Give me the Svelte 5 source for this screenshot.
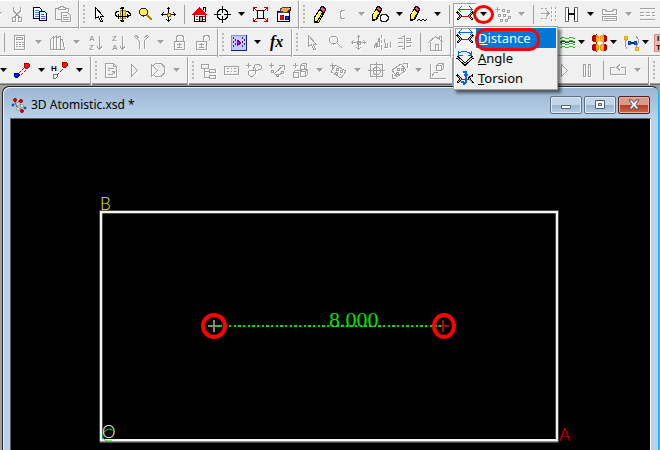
<script>
// each shape: [path, stroke, fill, width], or { t, x, y, size } for a letter
const pencil = [
	['M12 1l4 3-7 13-5 1 0-5z', '#000', '#ff0'],
	['M12 1l4 3-2 4-4-3z', '#000', '#f49'],
	['M13 7l-6 10M4 16l0 2 3-1z', '#000', '#000'],
	['M10 6l-5 8', '#fff'],
]
const miniPencil = [
	['M7 1l4 3-5 10-5 2 0-5z', '#000', '#ff0'],
	['M7 1l4 3-2 3-4-3z', '#000', '#f49'],
	['M9 7l-4 7M1 14l0 2 3-1z', '#000', '#000'],
	['M5 6l-3 5', '#fff'],
]
const cursor = 'M5.5 2.5v11l3-2 2 5h2l-2-5h3z'
const lens = 'M3.500 7a4 4 0 1 0 8 0a4 4 0 1 0-8 0zM11 10l5 5'
const move = 'M9.5 2v15M2 9.5h15M7.5 4.5l2-2 2 2M7.5 14.5l2 2 2-2M4.5 7.5l-2 2 2 2M14.5 7.5l2 2-2 2'
const home = 'M2.5 9.5l7-6 8 6M4.5 9v8h11v-8M9.5 17v-6h3v6M13.5 6v-3h2v4'
const cube = 'M9.5 10.5h5v5h-5zM9.5 10.5l2-2h5v5l-2 2M14.5 10.5l2-2'
const icons = {
	cut: [['M5.5 2v4l6 6M12.5 2v4l-6 6'], ['M4.5 12.5h3v4h-3zM10.5 12.5h3v4h-3z']],
	copy: [
		['M2.5 2.5h6l2 2v9h-8z', '#000', '#fff'], ['M4 5.5h4M4 7.5h4M4 9.5h4M4 11.5h4', '#48f'],
		['M8.5 6.5h5l2 2v7h-7z', '#000', '#ffc'], ['M10 9.5h3M10 11.5h4M10 13.5h4', '#26f'],
	],
	paste: [['M7 14.5h-5.5v-11h3M11 3.5h3v3M4.5 4.5v-2h2v-1h3v1h2v2zM7.5 7.5h6l3 3v6h-9zM9 10.5h4M9 12.5h6M9 14.5h6']],
	cursor: [[cursor, '#000', '#fff']],
	cursorOff: [[cursor]],
	rotate: [
		['M7 5h5v8h-5z', '#a90', '#fd0'], ['M9.5 2v15M7.5 3.5l2-1 2 1M7.5 15.5l2 1 2-1', '#000'],
		['M6 6.5h-2l-2 2v2l3 1h9l3-1v-2l-2-2h-2M5.5 9v5M14.5 9v4', '#000'],
	],
	zoom: [[lens, '#222', '#ffe95a'], ['M11 10l5 5', '#a80', 'none', 2]],
	zoomOff: [[lens]],
	move: [[move, '#000'], ['M8 8h3v3h-3z', '#860', '#fd0']],
	moveOff: [[move], ['M8 8h3v3h-3z']],
	home: [
		['M4.5 8v8h11v-8', '#000', '#fff'], ['M2.5 9.5l7-7 7 7z', '#d00', '#f00'],
		['M13.5 5v-3h2v5', '#000'], ['M9 11h3v5h-3z', '#000', '#aaa'], ['M6 11.5h2M13 11.5h2M6 14.5h2M13 14.5h2', '#d00'],
	],
	homeOff: [[home]],
	target: [['M7 4.500h5l2.500 2.500v5l-2.500 2.500h-5l-2.500-2.500v-5zM9.500 1v7M9.500 11v7M1 9.500h7M11 9.500h7', '#000']],
	fit: [
		['M6.500 5.500h6v8h-6z', '#000'],
		['M2.500 6v-3.500h3M13 2.500h3.500v3.500M2.500 13v3.500h3M13 16.500h3.500v-3.500M3 3l3 3M16 3l-3 3M3 16l3-3M16 16l-3-3', '#c00'],
	],
	props: [
		['M3.500 6.500h12v10h-12z', '#000', '#fff'], ['M3 7.500h12', '#22c'],
		['M6 10h3v4h-3z', '#c00', '#f00'], ['M11 11h3v3h-3z', '#008', '#24d'],
		['M6 4l4-2h5l1 3-5 3-5-2z', '#542', '#eca45c'], ['M14.500 2.500h2v3', '#000', '#fff'],
	],
	pencil,
	arc: [['M12 5.500h-3l-2 2v4l2 2h3']],
	pencilRing: [...miniPencil, ['M11 9.500h4l2 2v3l-2 2h-4l-2-2v-3z', '#222', '#fff']],
	pencilWave: [...miniPencil, ['M8 16l2-2 2 2 2-2 2 2 2-2', '#000']],
	distance: [
		['M3 4.500h15M6.500 1.500l-3 3 3 3M14.500 1.500l3 3-3 3', '#06e'],
		['M2 7l4 4-4 4M18 7l-4 4 4 4', '#000', 'none', 2],
		['M3 8l3 3-3 3M17 8l-3 3 3 3', '#bbb'], ['M7 11.500h7', '#e00'],
	],
	angle: [
		['M3 6.500c2-4 10-4 13 0M3.500 3v4h4M16.500 3v4h-4', '#06e'],
		['M2 9l8 7 8-7', '#000', 'none', 3], ['M2 9l8 7 8-7', '#ccc'],
	],
	torsion: [
		['M2 7l4 4-4 4M18 7l-4 3 4 5', '#000', 'none', 2],
		['M3 8l3 3-3 3M17 8l-3 3 3 4', '#bbb'], ['M6 11.500h8', '#e00'],
		['M8 3.500h3v11l-3 2M6 13.500h3M9 7h4', '#06e', 'none', 2],
	],
	dots: [['M2 4.500h5M4.500 2v5M9.500 4.500h2v2h-2zM14.500 5.500h2v2h-2zM5.500 9.500h2v2h-2zM10.500 9.500h2v2h-2zM15.500 11.500h2v2h-2zM7.500 14.500h2v2h-2zM12.500 14.500h2v2h-2z']],
	shift: [['M2 3.500h2M6 3.500h2M2 8.500h8M7 5l3 3.500-3 3M2 13.500h2M6 13.500h2M12.500 2v2M12.500 6v2M12.500 10v2M12.500 14v2M16.500 2v2M16.500 6v2M16.500 10v2M16.500 14v2']],
	hbond: [
		['M3.500 2.500h3v14h-3zM12.500 2.500h3v14h-3z', '#777', '#fff'],
		['M6.500 4v11M12.500 4v11M7 9.500h6M7 8.500h6', '#111'],
	],
	tray: [['M2.500 4v5h14v-5h-2l-2 2h-6l-2-2zM2.500 11.500h14v4h-14zM4 13.500h11']],
	lines: [['M2 3.500h15M2 7.500h4M8 7.500h4M14 7.500h3M2 10.500h4M8 10.500h4M14 10.500h3M2 14.500h15']],
	calc: [['M4.500 2.500h10v14h-10zM6.500 4.500h6v2h-6zM6 9.500h2M9 9.500h2M12 9.500h2M6 11.500h2M9 11.500h2M12 11.500h2M6 13.500h2M9 13.500h2M12 13.500h2']],
	books: [['M2.500 16.500v-10l3-3v13zM5.500 5.500l3-3v14h-3M8.500 4.500l4-1v13h-4M12.500 6.500h2l2 10h-4']],
	sortAZ: [{ t: 'A', x: 3, y: 8, size: 8 }, { t: 'Z', x: 3, y: 17, size: 8 }, ['M13.500 3v13M11 13.500l2.500 3 2.500-3']],
	sortZA: [{ t: 'Z', x: 3, y: 8, size: 8 }, { t: 'A', x: 3, y: 17, size: 8 }, ['M13.500 3v13M11 13.500l2.500 3 2.500-3']],
	funnel: [['M2 3l5 5v8M17 3l-5 5v8M3 2l4 3M16 2l-4 3']],
	lock: [['M4.500 8.500h10v8h-10zM6.500 8v-4l2-2h3l2 2v4M7 11.500h5M7 14.500h5M9.500 10v5']],
	unlock: [['M3.500 8.500h10v8h-10zM10.500 8v-4l2-2h2l2 2v4M6 11.500h5M6 14.500h5M8.500 10v5']],
	filmstrip: [
		['M2 2h15v15h-15z', '#8888ee', '#c8c8ff'], ['M17 2v15h-15', '#1020a0'],
		['M4.500 4v2M6.500 6v2M4.500 8v2M6.500 10v2M4.500 12v2M13.500 4v2M15.500 6v2M13.500 8v2M15.500 10v2M13.500 12v2', '#333'],
		['M8 7l4 3-4 3z', '#70c', '#82e'],
	],
	fx: [{ t: 'fx', x: 3, y: 14, size: 16, italic: true }],
	mirror: [['M9.500 2v3M9.500 7v3M9.500 12v5M7 5l-2 8h2zM2 15l2-5v5M12 6l2 8h-2M15 10v5M18 9v6']],
	align: [['M9.500 2v15M3 5.500h5M3 9.500h5M3 13.500h5M11 5.500h4v2h-4M11 9.500h6M11 13.500h4v-2M6.500 3.500h3v12h-3']],
	waves: [
		['M2 6l3-2 4 2 4-2 4 2M2 15l3-2 4 2 4-2 4 2', '#3b3'], ['M2 9l3-2 4 2 4-2 4 2M2 12l3-2 4 2 4-2 4 2', '#4a4'],
		['M2 10l3-2 4 2 4-2 4 2', '#050'],
	],
	orbitals: [
		['M6 2a3 3 0 0 0 0 7zM6 11a3 3 0 0 0 0 7zM13 2a3 3 0 0 1 0 7zM13 11a3 3 0 0 1 0 7z', '#a00', '#c00'],
		['M6 2a2 3 0 0 1 0 7zM6 11a2 3 0 0 1 0 7zM13 2a2 3 0 0 0 0 7zM13 11a2 3 0 0 0 0 7z', '#f90', '#fb3'],
	],
	chain: [
		['M5 6l-2 3v3l2 4M14 3l2 3v4l-2 4', '#999'], ['M7 10h6', '#222', 'none', 2],
		['M2 3h3v3h-3zM13 14h3v3h-3z', '#da0', '#fc0'], ['M6 8h2v3h-2zM12 8h2v3h-2z', '#04c', '#06f'],
	],
	table: [['M0 1h19v17h-19z', '#d98c80', '#f3b9a8'], { t: 'I', x: 3, y: 8, size: 8 }, { t: 'T', x: 2, y: 17, size: 8 }],
	bond: [
		['M6 12l2-2M9 9l2-2M8 14l2-2M11 11l2-2', '#d00'],
		['M2 12h3l1 1v2l-1 1h-3l-1-1v-2z', '#00a', '#11e'], ['M12 2h3l1 1v3l-1 1h-3l-1-1v-3z', '#a00', '#f11'],
	],
	hydrogen: [
		{ t: 'H', x: 0, y: 10, size: 8, dark: true }, ['M6 14l2-2M9 11l3-3', '#333'],
		['M2 13h3l1 1v2l-1 1h-3z', '#777', '#fff'], ['M12 1h3l1 1v3l-1 1h-3l-1-1v-3z', '#a00', '#f11'],
	],
	doc: [['M3.500 2.500h8l3 3v11h-11zM11.500 2.500v3h3M6 7.500h6M6 9.500h2M6 13.500h4l2-3M10 10.500h2v2']],
	play: [['M6.500 3.500v12l6-6z']],
	playRing: [['M3.500 3.500v12l6-6zM5 4.500l3-2h5l3 3v7l-3 3h-5l-3-2']],
	tree: [['M2.500 3.500h7v4h-7zM10.500 8.500h6v3h-6zM10.500 14.500h6v3h-6zM5.500 8v8h5M5.500 10.500h5']],
	strip: [['M2.500 5.500h14v8h-14zM5 7.500h2M5 10.500h2M9 7.500h1M9 10.500h1M12 7.500h2M12 10.500h2']],
	loopAdd: [['M1 4.500h5M3.500 2v5M8 9l2-5 3-1 3 2v3l-3 1h-8l-2 2v2l2 2h3l2-2v-6']],
	vectorAdd: [['M1 4.500h5M3.500 2v5M7 12l8-7M11 4.500h5v4M3.500 9.500h2v2h-2zM8.500 13.500h2v2h-2zM13.500 10.500h2v2h-2zM6 12l2 2M11 14l3-2']],
	cubeAdd: [['M2 4.500h5M4.500 2v5M9.500 4.500h4v4h-4zM9.500 4.500l2-2h4v4l-2 2M2.500 11.500h5v5h-5zM2.500 11.500l2-2h5'], [cube]],
	cellAdd: [['M1 4.500h5M3.500 2v5M6 4l11 6-5 7-10-6zM7.500 7.500h2v2h-2zM11.500 9.500h2v2h-2zM6.500 11.500h2v2h-2zM10.500 13.500h1']],
	frame: [['M3.500 3.500h12v12h-12zM9.500 1v17M1 9.500h17M7.500 6.500h4l2 2v3l-2 2h-4l-1-2v-3z']],
	cellSpin: [['M2 9l9-6 5 6-9 7zM7.500 7.500h2v2h-2zM11.500 7.500h2v2h-2zM6.500 11.500h2v2h-2zM13 2.500h4v4M2 13v4h4']],
	axes: [['M2.500 3v14h15M4 15l3-4 3 1'], ['M8.500 4.500h5v5h-5zM8.500 4.500l2-2h5v5l-2 2M13.500 4.500l2-2']],
	pause: [['M5.500 3.500h2v12h-2zM10.500 3.500h2v12h-2z']],
	loop: [['M6 6.500h-4.500v7h15v-7h-5M11 3.500l-3 3 3 3']],
}

// '|' separator, '/' toolbar boundary, 'v' and 'V' drop arrows (off, on), '-name' greyed out
const rows = [
	'v -cut copy -paste / cursor rotate zoom move | home target V fit props / pencil -arc v pencilRing V pencilWave V | distance V! -dots v | -shift hbond V -tray v -lines',
	'| -calc v -books v -sortAZ -sortZA -funnel v -lock -unlock / filmstrip V fx / -cursorOff -zoomOff -moveOff -mirror -align | -homeOff / ~ waves V orbitals V chain V table',
	'V bond V hydrogen V / -doc -play -playRing v / -tree -strip -loopAdd -vectorAdd -cubeAdd v -cellAdd v -frame -cellSpin v -axes / ~ -play -pause | -loop v /',
].map(r => r.split(' '))

const measures = ['Distance', 'Angle', 'Torsion']
let picked = $state('Distance')
</script>

{#snippet icon(name)}
<svg class="icon" viewBox="0 0 19 19" aria-hidden="true">
	{#each icons[name] as s}
	{#if s.t}
	<text class:italic={s.italic} class:dark={s.dark} x={s.x} y={s.y} font-size={s.size}>{s.t}</text>
	{:else}
	<path d={s[0]} stroke={s[1] || 'currentColor'} fill={s[2] || 'none'} stroke-width={s[3] || 1} />
	{/if}
	{/each}
</svg>
{/snippet}

<main>
	{#each rows as row, i}
	<div class="bar bar{i}" role="toolbar" aria-label="Toolbar {i + 1}">
		{#each row as item}
		{#if item == '|'}
		<i class="sep"></i>
		{:else if item == '/'}
		<i class="edge"></i>
		{:else if item == '~'}
		<i class="space"></i>
		{:else if item[0].toLowerCase() == 'v'}
		<button class="drop" class:ringed={item == 'V!'} disabled={item == 'v'} aria-label="More">
			<svg viewBox="0 0 9 5"><path d="M1 0h7l-3.500 4z" fill="currentColor" /></svg>
		</button>
		{:else if item == 'distance'}
		<div class="measure">
			<button class="tool pressed" aria-label={item}>{@render icon(item)}</button>
			<div class="menu" role="menu">
				{#each measures as m}
				<button role="menuitem" class:on={picked == m} onclick={() => picked = m}>
					<span class="pic">{@render icon(m.toLowerCase())}</span>
					<span class="name"><u>{m[0]}</u>{m.slice(1)}</span>
				</button>
				{/each}
			</div>
		</div>
		{:else}
		<button class="tool" disabled={item[0] == '-'} aria-label={item.replace('-', '')}>{@render icon(item.replace('-', ''))}</button>
		{/if}
		{/each}
	</div>
	{/each}

	<div class="desk">
		<section class="window">
			<header>
				<svg class="logo" viewBox="0 0 16 16" aria-hidden="true">
					<path d="M3 3l3 7 5 3M9 3l-3 3 7 4" stroke="#555" fill="none" />
					<g fill="#e00" stroke="#a00"><circle cx="4" cy="3" r="1.500" /><circle cx="10" cy="4" r="1.500" /><circle cx="11" cy="14" r="1.500" /></g>
					<g fill="#fff" stroke="#999"><circle cx="7" cy="7" r="1.500" /><circle cx="7" cy="12" r="1.500" /><circle cx="11" cy="9" r="1.500" /></g>
					<g fill="#28e" stroke="#048"><circle cx="2" cy="8" r="1" /><circle cx="14" cy="11" r="1" /></g>
				</svg>
				<h1>3D Atomistic.xsd *</h1>
				<button class="ctl" aria-label="Minimize"><svg viewBox="0 0 12 11"><path d="M1.500 6.500h9v3h-9z" fill="#fff" stroke="#5b6673" /></svg></button>
				<button class="ctl" aria-label="Maximize"><svg viewBox="0 0 12 11"><path d="M1.500 1.500h9v8h-9zM4.500 4.500h3v2h-3z" fill="#fff" fill-rule="evenodd" stroke="#4d5b6b" /></svg></button>
				<button class="ctl close" aria-label="Close"><svg viewBox="0 0 12 11"><path d="M1 1h3l2 2.500 2-2.500h3l-3 4.500 3 4.500h-3l-2-2.500-2 2.500h-3l3-4.500z" fill="#fff" stroke="#5b4a55" /></svg></button>
			</header>
			<svg class="scene" role="img" aria-label="Unit cell">
				<rect class="shade" x="90" y="93" width="456" height="229" />
				<rect class="cell" x="90" y="93" width="456" height="228" />
				<text x="89" y="91" fill="#f0f000">B</text>
				<text x="548" y="322" fill="#ff0000">A</text>
				<path d="M102 311a7 7 0 0 0-8 1a6 6 0 0 0 1 10h6" fill="none" stroke="#00e000" />
				<text x="91" y="319" fill="#fff">O</text>
				<path d="M197 207h13M203 201v12" stroke="#888" stroke-width="2" />
				<path d="M427 207h11M432 201v12" stroke="#a01010" stroke-width="2" />
				<path class="dots" d="M204 207h228" />
				<text class="length" x="318" y="208">8.000</text>
				<ellipse class="mark" cx="203" cy="207" rx="11" ry="11" />
				<ellipse class="mark" cx="433" cy="207" rx="10" ry="11" />
			</svg>
		</section>
	</div>
</main>

<style>
:global(body) {
	margin: 0;
	background: #f0f0f0;
}
main {
	display: flex;
	flex-direction: column;
	height: 100vh;
	overflow: hidden;
	font-family: "Noto Sans", sans-serif;
}
button {
	padding: 0;
	border: 0;
	background: none;
	color: #000;
	font: inherit;
}
.bar {
	display: flex;
	flex: none;
	align-items: flex-start;
	box-sizing: border-box;
	height: 28px;
	padding-top: 2px;
	border-top: 1px solid #fff;
	border-bottom: 1px solid #a0a0a0;
	background: #f0f0f0;
}
.bar > * {
	flex: none;
}
.bar0 > :first-child {
	margin-left: -9px;
}
.bar2 > :first-child {
	margin-left: -4px;
}
.tool {
	display: block;
	width: 23px;
	height: 23px;
	padding: 2px;
}
.icon {
	display: block;
	overflow: visible;
	width: 19px;
	height: 19px;
	shape-rendering: crispEdges;
}
.icon text {
	font-family: "Liberation Sans", sans-serif;
	font-weight: bold;
	fill: currentColor;
}
.icon .italic {
	font-family: "Liberation Serif", serif;
	font-style: italic;
}
button:disabled {
	color: #a0a0a0;
}
button:disabled svg {
	filter: drop-shadow(1px 1px 0 #fff);
}
.drop {
	display: flex;
	position: relative;
	justify-content: center;
	align-items: center;
	width: 15px;
	height: 23px;
}
.drop svg {
	width: 9px;
	height: 5px;
}
.ringed {
	z-index: 3;
}
.ringed::after {
	content: '';
	position: absolute;
	left: -3px;
	top: 2px;
	width: 15px;
	height: 13px;
	border: 3px solid #f00;
	border-radius: 50%;
}
.sep {
	width: 1px;
	height: 19px;
	margin: 2px 3px 0 4px;
	background: #a0a0a0;
}
.edge {
	position: relative;
	width: 9px;
	height: 28px;
	margin: -2px 0 -2px 3px;
	border-left: 1px solid #a0a0a0;
	box-shadow: inset 1px 0 #fff;
}
.edge::after {
	content: '';
	position: absolute;
	left: 4px;
	top: 4px;
	width: 2px;
	height: 18px;
	background: repeating-linear-gradient(#b8b8b8 0 2px, transparent 2px 4px);
}
.space {
	width: 98px;
}
.bar2 .space {
	width: 91px;
}
/* tighter split buttons after the gap */
.bar1 .space ~ .tool {
	width: 19px;
	padding: 2px 0;
}
.bar1 .space ~ .drop {
	width: 9px;
	margin-right: 4px;
}
.measure {
	position: relative;
	z-index: 2;
}
.pressed {
	box-shadow: inset 1px 1px #a0a0a0, inset -1px -1px #fff;
	background: #f8f8f8;
}
.menu {
	position: absolute;
	left: 0;
	top: 23px;
	width: 101px;
	padding: 1px;
	border: 1px solid #a0a0a0;
	background: #f0f0f0;
	box-shadow: inset 1px 1px #fff, 3px 3px 3px #0008;
}
.menu button {
	display: flex;
	position: relative;
	width: 100%;
	height: 20px;
	font-size: 13px;
	line-height: 20px;
	text-align: left;
}
.pic {
	width: 21px;
}
.name {
	flex: 1;
	padding-left: 2px;
}
.on .pic {
	background: #f8f8f8;
	box-shadow: inset 1px 1px #a0a0a0;
}
.on .name {
	background: #0078d7;
	color: #fff;
}
.on::after {
	content: '';
	position: absolute;
	left: 20px;
	top: 0;
	width: 59px;
	height: 17px;
	border: 3px solid #f00;
	border-radius: 11px;
}
.desk {
	display: flex;
	flex: 1;
	min-height: 0;
	padding: 1px 1px 0 2px;
	border-top: 1px solid #696969;
	background: #a0a0a0;
}
.window {
	display: flex;
	flex: 1;
	flex-direction: column;
	padding: 0 7px;
	border: 1px solid #222;
	border-right-color: #00b8e8;
	border-bottom: 0;
	border-radius: 7px 7px 0 0;
	background: linear-gradient(#9cb5d1, #b9d1ea 32px);
	box-shadow: inset 1px 1px #e8f2fc;
}
header {
	display: flex;
	align-items: center;
	gap: 2px;
	box-sizing: border-box;
	height: 31px;
	padding: 4px 1px 0;
}
.logo {
	width: 16px;
	height: 16px;
}
h1 {
	flex: 1;
	margin: 0 0 0 2px;
	font-size: 12px;
	font-weight: normal;
	line-height: 18px;
}
.ctl {
	display: flex;
	justify-content: center;
	align-items: center;
	box-sizing: border-box;
	width: 32px;
	height: 18px;
	border: 1px solid #5f7186;
	border-radius: 2px;
	background: linear-gradient(#c3d5e8 50%, #9cb5d0 50%, #b5cde6);
	box-shadow: inset 0 0 0 1px #dce8f5;
}
.ctl svg {
	width: 12px;
	height: 11px;
}
.close {
	border-color: #54201e;
	background: linear-gradient(#dc9a8a 50%, #b83a22 50%, #cf6a4a);
	box-shadow: inset 0 0 0 1px #e6b0a4;
}
.scene {
	flex: 1;
	width: 100%;
	box-sizing: border-box;
	min-height: 0;
	border: 1px solid #606060;
	border-right-color: #fff;
	border-bottom: 0;
	background: #000;
	font: 300 17px Lato, "Liberation Sans", sans-serif;
}
.shade,
.cell {
	fill: none;
	stroke: #909090;
	stroke-width: 3px;
}
.cell {
	stroke: #f4f4f4;
	stroke-width: 2px;
}
.dots {
	stroke: #00e000;
	stroke-width: 2px;
	stroke-dasharray: 2 3 2 2 3 2;
}
.length {
	fill: #00e000;
	font: 22px "Liberation Serif", serif;
}
.mark {
	fill: none;
	stroke: #f00;
	stroke-width: 4px;
}
</style>
